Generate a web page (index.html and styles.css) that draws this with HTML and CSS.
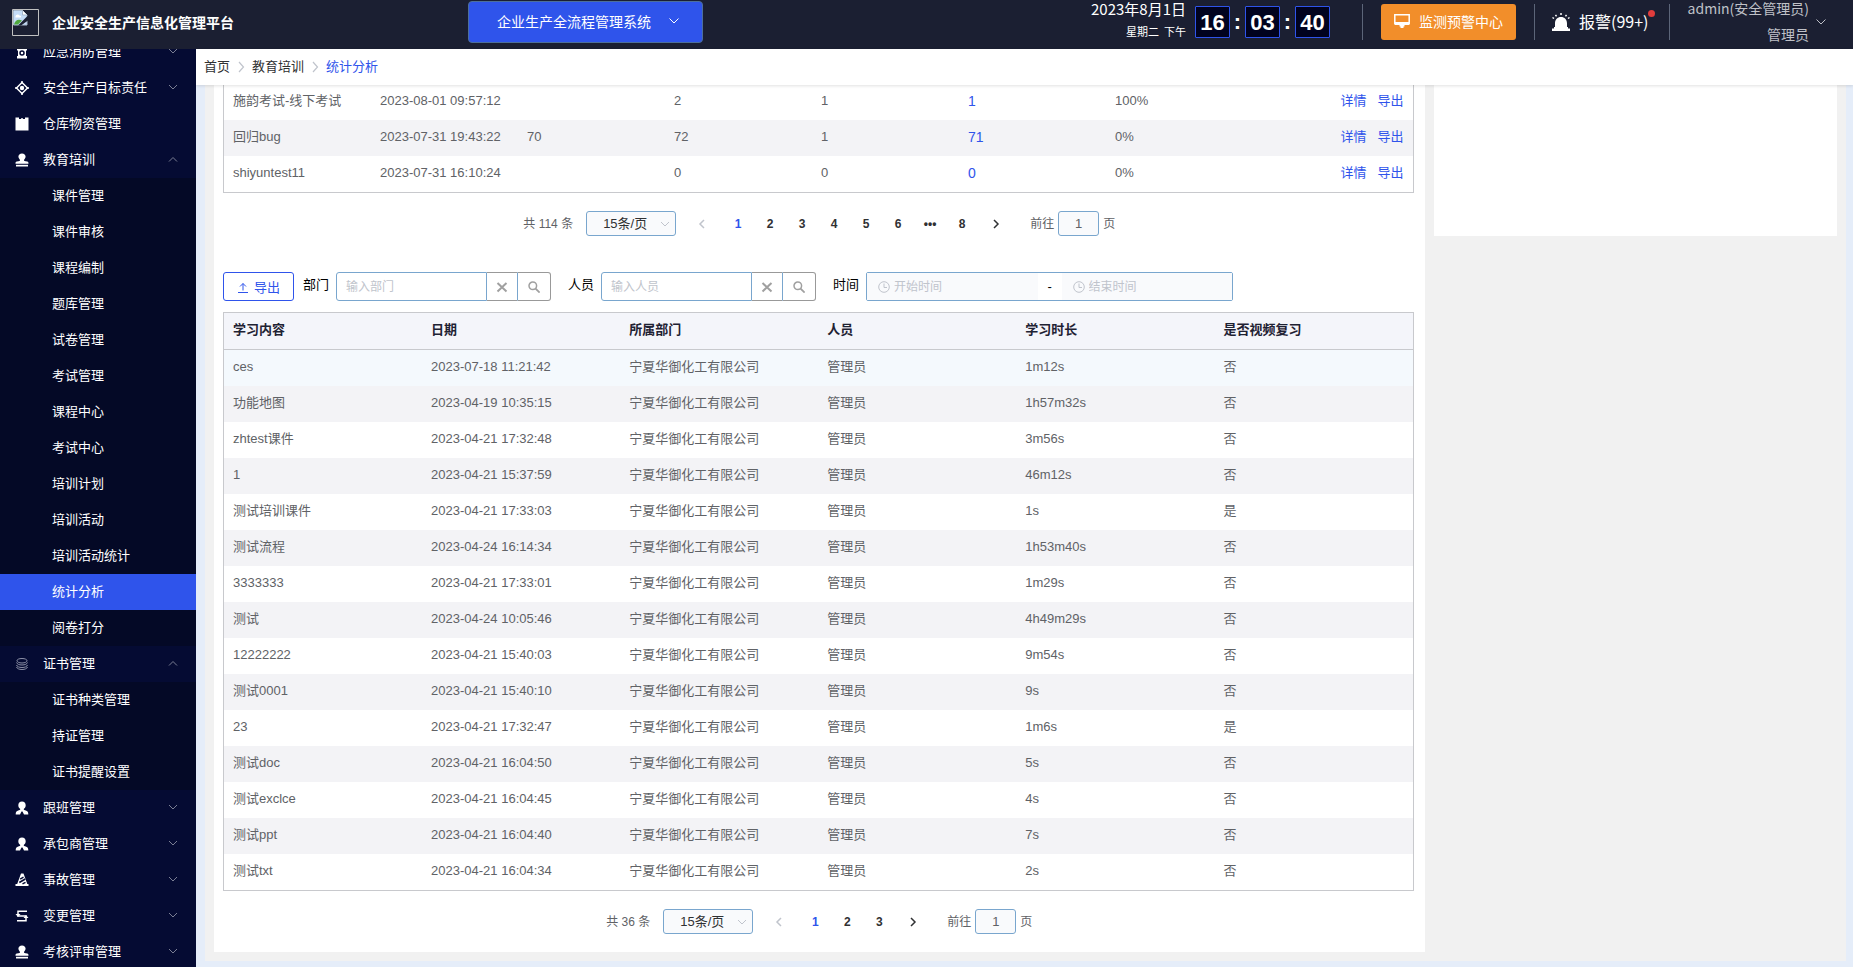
FILE: index.html
```html
<!DOCTYPE html>
<html lang="zh-CN">
<head>
  <meta charset="UTF-8">
  <meta name="viewport" content="width=device-width, initial-scale=1.0">
  <title>企业安全生产信息化管理平台</title>
  <link rel="stylesheet" href="styles.css">
</head>
<body>
  <!-- Shared icons -->
  <svg class="sprite" aria-hidden="true">
    <symbol id="i-down" viewBox="0 0 12 12"><path d="M1.500 3.500 6 8l4.500-4.500" fill="none" stroke="currentColor"/></symbol>
    <symbol id="i-up" viewBox="0 0 12 12"><path d="M2 7.500 6 3.500l4 4" fill="none" stroke="currentColor"/></symbol>
    <symbol id="i-fold" viewBox="0 0 12 12"><path d="M2 3l4 4 4-4" fill="none" stroke="currentColor"/></symbol>
    <symbol id="i-left" viewBox="0 0 12 12"><path d="M8 2 4 6l4 4" fill="none" stroke="currentColor" stroke-width="1.500"/></symbol>
    <symbol id="i-right" viewBox="0 0 12 12"><path d="M4 2l4 4-4 4" fill="none" stroke="currentColor" stroke-width="1.500"/></symbol>
    <symbol id="i-sep" viewBox="0 0 12 12"><path d="M4 1l4.500 5L4 11" fill="none" stroke="currentColor" stroke-width="1.200"/></symbol>
    <symbol id="i-close" viewBox="0 0 12 12"><path d="M1.500 2l9 8.500M10.500 2l-9 8.500" fill="none" stroke="currentColor" stroke-width="2"/></symbol>
    <symbol id="i-search" viewBox="0 0 12 12"><circle cx="4.800" cy="4.800" r="3.800" fill="none" stroke="currentColor" stroke-width="1.500"/><path d="M7.600 7.600l4 4" stroke="currentColor" stroke-width="1.800"/></symbol>
    <symbol id="i-clock" viewBox="0 0 12 12"><circle cx="6" cy="6" r="5.300" fill="none" stroke="currentColor"/><path d="M6 2.500V6.500h3" fill="none" stroke="currentColor"/></symbol>
    <symbol id="i-stamp" viewBox="0 0 14 14"><path d="M7 .5c2.200 0 3.600 1.400 3.600 3.200C10.600 5.200 9 6 9 7.300c0 .8.600 1 3.200 1.200.9.100 1.300.6 1.300 2.300H.5c0-1.700.4-2.200 1.300-2.300C4.400 8.300 5 8.100 5 7.300 5 6 3.400 5.200 3.400 3.700 3.400 1.900 4.800.5 7 .5z" fill="currentColor"/><path d="M1 11.800h12v1.700H1z" fill="currentColor"/></symbol>
    <symbol id="i-user" viewBox="0 0 14 14"><path d="M7 .5c2.300 0 3.700 1.500 3.700 3.700 0 1.600-.8 3-2 3.800 0 .8.600 1.100 2.600 1.700 1.500.5 2 1.500 2 3.800H9L7.500 10.500h-1L5 13.500H.7c0-2.300.5-3.300 2-3.800 2-.6 2.600-.9 2.600-1.700-1.200-.8-2-2.200-2-3.800C3.300 2 4.700.5 7 .5z" fill="currentColor"/></symbol>
  </svg>

  <header class="header">
    <div class="brand">
      <svg class="logo" viewBox="0 0 27 27" role="img" aria-label="logo">
        <path d="M.5.500h26v26H.5z" fill="none" stroke="#c0c0c0"/>
        <path d="M1.500 1.500h9l4.500 4.500v10H1.500z" fill="#c5dcf7" stroke="#a9b9cc"/>
        <path d="M3.500 7.500c0-2 3-3 4-1 2 0 2 2 1 2h-5z" fill="#fff"/>
        <path d="M2 15.500c1-4 4-6 8-4l-4 4z" fill="#4fa83d"/>
        <path d="M16 6.500 6 16.500h3l7-5z" fill="#1b1f32"/>
        <path d="M10.500 1.500V6H15" fill="#fff" stroke="#a9b9cc"/>
      </svg>
      <h1>企业安全生产信息化管理平台</h1>
    </div>

    <button class="system-button" type="button">企业生产全流程管理系统
      <svg class="icon"><use href="#i-down"/></svg>
    </button>

    <div class="header-right">
      <div class="date">
        <p>2023年8月1日</p>
        <p class="weekday">星期二&nbsp; 下午</p>
      </div>
      <div class="clock"><b>16</b><i>:</i><b>03</b><i>:</i><b>40</b></div>
      <div class="monitor">
        <button class="monitor-button" type="button">
          <svg class="icon-lg" viewBox="0 0 16 16"><path d="M.8 1.800h14.400v9H.8z" fill="none" stroke="#fff" stroke-width="1.500"/><path d="M1 9h14v3H1zM5.500 12h5v1.500h-1V15h-3v-1.500h-1z" fill="#fff"/></svg>
          监测预警中心
        </button>
      </div>
      <a class="alarm" href="#">
        <svg class="icon-bell" viewBox="0 0 18 18"><path d="M3 14V10.500c0-4 2.500-6.500 6-6.500s6 2.500 6 6.500V14h1v1.500h2V18H0v-2.500h2V14z" fill="#fff"/><path d="M9 0v2M3.500 1.800l1 1.500M14.500 1.800l-1 1.500M.5 4.500l1.500 1M17.500 4.500l-1.500 1" stroke="#fff" stroke-width="1.500"/></svg>
        <span class="alarm-text">报警(99+)</span>
      </a>
      <div class="account">
        <div>
          <p>admin(安全管理员)</p>
          <p>管理员</p>
        </div>
        <svg class="icon"><use href="#i-down"/></svg>
      </div>
    </div>
  </header>

  <div class="layout">
    <nav class="sidebar">
      <ul class="menu">
        <li><a href="#"><svg class="menu-icon" viewBox="0 0 14 14"><path d="M5 1h4v1.500h2V4h1v1.500h-1V11h1v2.500H2V11h1V5.500H2V4h1V2.500h2z" fill="#fff"/><circle cx="7" cy="8" r="2" fill="#fff" stroke="#050b33" stroke-width="1.500"/></svg>应急消防管理<svg class="arrow"><use href="#i-fold"/></svg></a></li>
        <li><a href="#"><svg class="menu-icon" viewBox="0 0 14 14"><path d="M7 1.500 12.500 7 7 12.500 1.500 7z" fill="none" stroke="#fff" stroke-width="1.500"/><circle cx="7" cy="7" r="2.200" fill="#fff"/><path d="M7 0v2.500M7 11.500V14M0 7h2.500M11.500 7H14" stroke="#fff" stroke-width="1.500"/></svg>安全生产目标责任<svg class="arrow"><use href="#i-fold"/></svg></a></li>
        <li><a href="#"><svg class="menu-icon" viewBox="0 0 14 14"><path d="M.5.500H4V2h2v-.8h2V2h2V.500h3.500v13H.5z" fill="#fff"/></svg>仓库物资管理</a></li>
        <li><a href="#"><svg class="menu-icon"><use href="#i-stamp"/></svg>教育培训<svg class="arrow"><use href="#i-up"/></svg></a>
          <ul class="submenu">
            <li><a href="#">课件管理</a></li>
            <li><a href="#">课件审核</a></li>
            <li><a href="#">课程编制</a></li>
            <li><a href="#">题库管理</a></li>
            <li><a href="#">试卷管理</a></li>
            <li><a href="#">考试管理</a></li>
            <li><a href="#">课程中心</a></li>
            <li><a href="#">考试中心</a></li>
            <li><a href="#">培训计划</a></li>
            <li><a href="#">培训活动</a></li>
            <li><a href="#">培训活动统计</a></li>
            <li><a class="active" href="#">统计分析</a></li>
            <li><a href="#">阅卷打分</a></li>
          </ul>
        </li>
        <li><a href="#"><svg class="menu-icon" viewBox="0 0 14 14"><path d="M7 1.500c3 0 5 1 5 2.200S10 6 7 6 2 5 2 3.700s2-2.200 5-2.200zM1.500 5.500C2 7 4 8 7 8s5-1 5.500-2.500M1.500 8c.5 1.500 2.500 2.500 5.500 2.500S12 9.500 12.500 8M1.500 10c.5 1.500 2.500 2.500 5.500 2.500s5-1 5.500-2.500" fill="none" stroke="#8d91a8"/></svg>证书管理<svg class="arrow"><use href="#i-up"/></svg></a>
          <ul class="submenu">
            <li><a href="#">证书种类管理</a></li>
            <li><a href="#">持证管理</a></li>
            <li><a href="#">证书提醒设置</a></li>
          </ul>
        </li>
        <li><a href="#"><svg class="menu-icon"><use href="#i-user"/></svg>跟班管理<svg class="arrow"><use href="#i-fold"/></svg></a></li>
        <li><a href="#"><svg class="menu-icon"><use href="#i-user"/></svg>承包商管理<svg class="arrow"><use href="#i-fold"/></svg></a></li>
        <li><a href="#"><svg class="menu-icon" viewBox="0 0 14 14"><path d="M6 .5h2.500l3.800 10.500h1.200v2H.5v-2h1.700z" fill="#fff"/><path d="M5.200 6.200l3.300-2M4.300 9.500l6-3.500M7.500 10.800l3-1.500" stroke="#050b33" stroke-width="1.500"/></svg>事故管理<svg class="arrow"><use href="#i-fold"/></svg></a></li>
        <li><a href="#"><svg class="menu-icon" viewBox="0 0 14 14"><path d="M12 2.200H3V7h4.500M2 11.800h9V7H7" fill="none" stroke="#fff" stroke-width="1.500"/><path d="M.5 5h5L3 8zM8.500 9h5L11 6z" fill="#fff"/></svg>变更管理<svg class="arrow"><use href="#i-fold"/></svg></a></li>
        <li><a href="#"><svg class="menu-icon"><use href="#i-stamp"/></svg>考核评审管理<svg class="arrow"><use href="#i-fold"/></svg></a></li>
      </ul>
    </nav>

    <div class="page">
      <nav class="breadcrumb">
        <a href="#">首页</a>
        <svg class="icon"><use href="#i-sep"/></svg>
        <a href="#">教育培训</a>
        <svg class="icon"><use href="#i-sep"/></svg>
        <a class="current" href="#">统计分析</a>
      </nav>

      <main class="content">
        <section class="panel">
          <!-- Exam records -->
          <table class="exam-table">
            <tbody>
              <tr><td>施韵考试-线下考试</td><td>2023-08-01 09:57:12</td><td></td><td>2</td><td>1</td><td><a href="#">1</a></td><td>100%</td><td class="actions"><a href="#">详情</a><a href="#">导出</a></td></tr>
              <tr><td>回归bug</td><td>2023-07-31 19:43:22</td><td>70</td><td>72</td><td>1</td><td><a href="#">71</a></td><td>0%</td><td class="actions"><a href="#">详情</a><a href="#">导出</a></td></tr>
              <tr><td>shiyuntest11</td><td>2023-07-31 16:10:24</td><td></td><td>0</td><td>0</td><td><a href="#">0</a></td><td>0%</td><td class="actions"><a href="#">详情</a><a href="#">导出</a></td></tr>
            </tbody>
          </table>

          <div class="pagination">
            <span class="total">共 114 条</span>
            <select aria-label="每页条数"><option>15条/页</option></select>
            <button class="prev" type="button" aria-label="上一页" disabled><svg class="icon"><use href="#i-left"/></svg></button>
            <div class="pager">
              <button class="active" type="button">1</button>
              <button type="button">2</button>
              <button type="button">3</button>
              <button type="button">4</button>
              <button type="button">5</button>
              <button type="button">6</button>
              <button type="button">•••</button>
              <button type="button">8</button>
            </div>
            <button class="next" type="button" aria-label="下一页"><svg class="icon"><use href="#i-right"/></svg></button>
            <label class="jump">前往<input type="text" value="1">页</label>
          </div>

          <form class="toolbar">
            <button class="export-button" type="button">
              <svg class="icon" viewBox="0 0 12 12"><path d="M6 9.500V2.500M3 5.500l3-3 3 3M1 11.500h10" fill="none" stroke="currentColor"/></svg>导出
            </button>
            <label for="dept">部门</label>
            <div class="search-box">
              <input type="text" id="dept" placeholder="输入部门">
              <button type="button" aria-label="清除部门"><svg class="icon"><use href="#i-close"/></svg></button>
              <button type="button" aria-label="搜索部门"><svg class="icon"><use href="#i-search"/></svg></button>
            </div>
            <label for="person">人员</label>
            <div class="search-box">
              <input type="text" id="person" placeholder="输入人员">
              <button type="button" aria-label="清除人员"><svg class="icon"><use href="#i-close"/></svg></button>
              <button type="button" aria-label="搜索人员"><svg class="icon"><use href="#i-search"/></svg></button>
            </div>
            <label for="start">时间</label>
            <div class="date-range">
              <div class="date-field"><svg class="icon"><use href="#i-clock"/></svg><input type="text" id="start" placeholder="开始时间"></div>
              <span>-</span>
              <div class="date-field"><svg class="icon"><use href="#i-clock"/></svg><input type="text" aria-label="结束时间" placeholder="结束时间"></div>
            </div>
          </form>

          <!-- Study records -->
          <table class="study-table">
            <thead>
              <tr><th>学习内容</th><th>日期</th><th>所属部门</th><th>人员</th><th>学习时长</th><th>是否视频复习</th></tr>
            </thead>
            <tbody>
              <tr class="hover"><td>ces</td><td>2023-07-18 11:21:42</td><td>宁夏华御化工有限公司</td><td>管理员</td><td>1m12s</td><td>否</td></tr>
              <tr><td>功能地图</td><td>2023-04-19 10:35:15</td><td>宁夏华御化工有限公司</td><td>管理员</td><td>1h57m32s</td><td>否</td></tr>
              <tr><td>zhtest课件</td><td>2023-04-21 17:32:48</td><td>宁夏华御化工有限公司</td><td>管理员</td><td>3m56s</td><td>否</td></tr>
              <tr><td>1</td><td>2023-04-21 15:37:59</td><td>宁夏华御化工有限公司</td><td>管理员</td><td>46m12s</td><td>否</td></tr>
              <tr><td>测试培训课件</td><td>2023-04-21 17:33:03</td><td>宁夏华御化工有限公司</td><td>管理员</td><td>1s</td><td>是</td></tr>
              <tr><td>测试流程</td><td>2023-04-24 16:14:34</td><td>宁夏华御化工有限公司</td><td>管理员</td><td>1h53m40s</td><td>否</td></tr>
              <tr><td>3333333</td><td>2023-04-21 17:33:01</td><td>宁夏华御化工有限公司</td><td>管理员</td><td>1m29s</td><td>否</td></tr>
              <tr><td>测试</td><td>2023-04-24 10:05:46</td><td>宁夏华御化工有限公司</td><td>管理员</td><td>4h49m29s</td><td>否</td></tr>
              <tr><td>12222222</td><td>2023-04-21 15:40:03</td><td>宁夏华御化工有限公司</td><td>管理员</td><td>9m54s</td><td>否</td></tr>
              <tr><td>测试0001</td><td>2023-04-21 15:40:10</td><td>宁夏华御化工有限公司</td><td>管理员</td><td>9s</td><td>否</td></tr>
              <tr><td>23</td><td>2023-04-21 17:32:47</td><td>宁夏华御化工有限公司</td><td>管理员</td><td>1m6s</td><td>是</td></tr>
              <tr><td>测试doc</td><td>2023-04-21 16:04:50</td><td>宁夏华御化工有限公司</td><td>管理员</td><td>5s</td><td>否</td></tr>
              <tr><td>测试exclce</td><td>2023-04-21 16:04:45</td><td>宁夏华御化工有限公司</td><td>管理员</td><td>4s</td><td>否</td></tr>
              <tr><td>测试ppt</td><td>2023-04-21 16:04:40</td><td>宁夏华御化工有限公司</td><td>管理员</td><td>7s</td><td>否</td></tr>
              <tr><td>测试txt</td><td>2023-04-21 16:04:34</td><td>宁夏华御化工有限公司</td><td>管理员</td><td>2s</td><td>否</td></tr>
            </tbody>
          </table>

          <div class="pagination">
            <span class="total">共 36 条</span>
            <select aria-label="每页条数"><option>15条/页</option></select>
            <button class="prev" type="button" aria-label="上一页" disabled><svg class="icon"><use href="#i-left"/></svg></button>
            <div class="pager">
              <button class="active" type="button">1</button>
              <button type="button">2</button>
              <button type="button">3</button>
            </div>
            <button class="next" type="button" aria-label="下一页"><svg class="icon"><use href="#i-right"/></svg></button>
            <label class="jump">前往<input type="text" value="1">页</label>
          </div>
        </section>

        <aside class="side-card"></aside>
      </main>
    </div>
  </div>
</body>
</html>
```

FILE: styles.css
```css
* {
  box-sizing: border-box;
}

body {
  margin: 0;
  height: 100vh;
  display: flex;
  flex-direction: column;
  overflow: hidden;
  font-family: "Liberation Sans", "Noto Sans CJK SC", sans-serif;
  font-size: 13px;
  line-height: 20px;
  color: #606266;
  background: #e5edf9;
}

h1, p, ul {
  margin: 0;
  padding: 0;
}

ul {
  list-style: none;
}

a {
  color: inherit;
  text-decoration: none;
}

button, input, select {
  font-family: inherit;
  font-size: inherit;
  color: inherit;
  margin: 0;
}

button {
  cursor: pointer;
}

svg {
  flex: none;
}

.sprite {
  display: none;
}

.icon {
  width: 12px;
  height: 12px;
}

/* Header */
.header {
  flex: none;
  height: 49px;
  display: flex;
  align-items: flex-start;
  background: #1b1f32;
  color: white;
  font-family: "Noto Sans CJK SC", sans-serif;
  font-size: 14px;
}

.brand {
  width: 468px;
  padding: 9px 0 0 12px;
  display: flex;
  align-items: center;
  gap: 13px;
}

.logo {
  width: 27px;
  height: 27px;
}

.brand h1 {
  padding-bottom: 2px;
  font-size: 14px;
  line-height: 20px;
}

.system-button {
  width: 235px;
  height: 42px;
  margin-top: 1px;
  padding: 0 0 2px 6px;
  display: flex;
  align-items: center;
  justify-content: center;
  gap: 17px;
  background: #2f54eb;
  color: white;
  border: 1px solid #4d6f9c;
  border-radius: 4px;
}

.header-right {
  margin-left: auto;
  display: flex;
  align-items: flex-start;
}

.date {
  margin-right: 9px;
  text-align: right;
  font-size: 15px;
}

.date p {
  line-height: 18px;
}

.date .weekday {
  margin-top: 4px;
  font-size: 11px;
}

.clock {
  display: flex;
  align-items: center;
  margin: 6px 32px 0 0;
  font-family: "Liberation Sans", sans-serif;
  font-size: 22px;
  font-weight: bold;
}

.clock b {
  width: 35px;
  height: 32px;
  line-height: 31px;
  text-align: center;
  background: #01031f;
  border: 1px solid #2f54eb;
  border-radius: 1px;
}

.clock i {
  width: 15px;
  text-align: center;
  font-style: normal;
}

.monitor, .alarm, .account {
  height: 36px;
  margin-top: 4px;
  display: flex;
  align-items: center;
  border-left: 1px solid #5c6579;
}

.monitor {
  padding: 0 18px;
}

.monitor-button {
  width: 135px;
  height: 36px;
  padding: 0 0 2px;
  display: flex;
  align-items: center;
  justify-content: center;
  gap: 9px;
  background: #f28e2a;
  color: white;
  border: none;
  border-radius: 3px;
}

.icon-lg {
  width: 16px;
  height: 16px;
}

.icon-bell {
  width: 18px;
  height: 18px;
}

.alarm {
  width: 135px;
  padding-left: 17px;
  gap: 9px;
  font-size: 16px;
}

.alarm-text {
  position: relative;
  padding-bottom: 3px;
}

.alarm-text::after {
  content: "";
  position: absolute;
  top: -1px;
  right: -7px;
  width: 7px;
  height: 7px;
  border-radius: 50%;
  background: #e03c3c;
}

.account {
  width: 184px;
  padding-right: 26px;
  justify-content: flex-end;
  gap: 6px;
  line-height: 26px;
  text-align: right;
  color: #bfc1c8;
}

.account div {
  padding-bottom: 2px;
}

/* Layout */
.layout {
  flex: 1;
  min-height: 0;
  display: flex;
}

/* The menu is scrolled, so its first item is partly hidden */
.sidebar {
  flex: none;
  width: 196px;
  overflow: hidden;
  background: #050b33;
  color: white;
}

.menu {
  margin-top: -15px;
}

.menu a {
  height: 36px;
  padding: 0 17px 0 15px;
  display: flex;
  align-items: center;
}

.menu-icon {
  width: 14px;
  height: 14px;
  margin-right: 14px;
}

.arrow {
  width: 12px;
  height: 12px;
  margin-left: auto;
  color: #7b7f94;
}

.submenu {
  background: #040926;
}

.menu .submenu a {
  padding-left: 52px;
}

.submenu .active {
  background: #2f54eb;
}

.page {
  flex: 1;
  min-width: 0;
  display: flex;
  flex-direction: column;
}

.breadcrumb {
  flex: none;
  height: 36px;
  padding: 0 8px;
  display: flex;
  align-items: center;
  gap: 5px;
  background: white;
  color: #303133;
  box-shadow: 0 1px 3px rgba(0, 0, 0, 0.12);
  z-index: 1;
}

.breadcrumb .icon {
  color: #c0c4cc;
}

.breadcrumb .current {
  color: #2f54eb;
}

.content {
  margin: -1px 7px 0 9px;
  padding: 0 9px 9px;
  display: grid;
  grid-template-columns: 3fr 1fr;
  gap: 9px;
  align-items: start;
  background: #f1f1f1;
}

.panel {
  padding: 0 11px 18px 9px;
  background: white;
}

.side-card {
  height: 152px;
  background: white;
}

/* Tables */
table {
  width: 100%;
  table-layout: fixed;
  border-collapse: separate;
  border-spacing: 0;
  border: 1px solid #c8c9cd;
}

td, th {
  height: 36px;
  padding: 0 9px 2px;
  text-align: left;
  white-space: nowrap;
}

th {
  height: 37px;
  background: #f4f5fa;
  color: #1f2233;
  border-bottom: 1px solid #c8c9cd;
}

tbody tr:nth-child(even) {
  background: #f3f3f6;
}

tbody .hover {
  background: #f4f9fd;
}

.exam-table {
  border-top: none;
}

.exam-table td {
  width: 147px;
}

.exam-table td:last-child {
  width: auto;
}

.exam-table a {
  color: #2f54eb;
  font-size: 14px;
}

.exam-table .actions {
  text-align: right;
}

.exam-table .actions a {
  margin-left: 11px;
  font-size: 13px;
}

/* Pagination */
.pagination {
  margin-top: 18px;
  padding-left: 2px;
  display: flex;
  align-items: center;
  justify-content: center;
  font-size: 12px;
}

.pagination select {
  width: 90px;
  height: 25px;
  margin: 0 10px 0 13px;
  padding: 0 16px;
  appearance: none;
  border: 1px solid #79a6ce;
  border-radius: 3px;
  background: #f9fafc url("data:image/svg+xml,%3Csvg xmlns='http://www.w3.org/2000/svg' viewBox='0 0 12 12'%3E%3Cpath d='M2 4l4 4 4-4' fill='none' stroke='%23c0c4cc'/%3E%3C/svg%3E") no-repeat right 4px center / 12px;
  color: #303133;
  font-size: 13px;
}

.pagination button {
  width: 32px;
  height: 25px;
  padding: 0;
  border: none;
  background: none;
  color: #303133;
  font-weight: bold;
}

.pagination .prev {
  margin-right: 4px;
  color: #c0c4cc;
}

.pagination .next {
  margin: 0 18px 0 2px;
}

.pagination .icon {
  display: block;
  margin: 0 auto;
}

.pager {
  display: flex;
}

.pagination .pager .active {
  color: #2f54eb;
}

.jump {
  display: flex;
  align-items: center;
  gap: 4px;
}

.jump input {
  width: 41px;
  height: 25px;
  padding: 0;
  text-align: center;
  border: 1px solid #79a6ce;
  border-radius: 3px;
  background: #f9fafc;
  font-size: 13px;
}

/* Toolbar */
.toolbar {
  margin: 36px 0 11px;
  display: flex;
  align-items: center;
}

.toolbar label {
  margin: 0 7px 0 17px;
  padding-bottom: 4px;
  color: black;
}

.export-button {
  width: 71px;
  height: 29px;
  padding: 0;
  display: flex;
  align-items: center;
  justify-content: center;
  gap: 5px;
  background: white;
  color: #2f54eb;
  border: 1px solid #2f54eb;
  border-radius: 3px;
}

.toolbar .export-button + label {
  margin-left: 9px;
}

.search-box {
  height: 29px;
  display: flex;
}

.search-box input {
  width: 151px;
  padding: 0 9px;
  border: 1px solid #79a6ce;
  border-radius: 3px 0 0 3px;
  font-size: 12px;
}

.search-box button {
  width: 30px;
  padding: 0;
  display: flex;
  align-items: center;
  justify-content: center;
  background: white;
  color: #a0a0a0;
  border: 1px solid #999999;
  border-left: none;
  border-right: none;
}

.search-box button:last-child {
  width: 34px;
  border-left: 1px solid #79a6ce;
  border-right: 1px solid #999999;
  border-radius: 0 3px 3px 0;
}

.date-range {
  width: 367px;
  height: 29px;
  display: flex;
  border: 1px solid #79a6ce;
  border-radius: 2px;
  color: black;
}

.date-range > span {
  flex: none;
  width: 24px;
  line-height: 27px;
  text-align: center;
}

.date-field {
  flex: 1;
  min-width: 0;
  padding-left: 11px;
  display: flex;
  align-items: center;
  gap: 4px;
  background: #f9fafc;
  color: #c0c4cc;
}

.date-field input {
  flex: 1;
  min-width: 0;
  padding: 0;
  border: none;
  background: none;
  font-size: 12px;
}

input::placeholder {
  color: #c0c4cc;
}
```
